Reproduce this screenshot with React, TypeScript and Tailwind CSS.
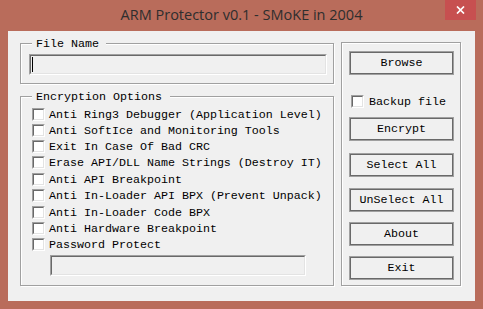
import React from "react";

const Check = () => (
  <div className="w-[13px] h-[13px] shrink-0 border border-t-[#a0a0a0] border-l-[#a0a0a0] border-b-white border-r-white">
    <div className="w-full h-full border border-t-[#696969] border-l-[#696969] border-b-[#e3e3e3] border-r-[#e3e3e3] bg-white" />
  </div>
);

const TextBox = ({ w, caret }: { w: string; caret?: boolean }) => (
  <div className={`${w} h-[21px] border border-t-[#a0a0a0] border-l-[#a0a0a0] border-b-white border-r-white`}>
    <div className="w-full h-full border border-t-[#696969] border-l-[#696969] border-b-[#e3e3e3] border-r-[#e3e3e3] bg-[#f0f0f0] pl-[1px] pt-[1px]">
      {caret ? <div className="w-[1px] h-[15px] bg-black" /> : null}
    </div>
  </div>
);

const Btn = ({ label, mt }: { label: string; mt: string }) => (
  <div className={`${mt} w-[105px] h-[24px] border border-[#a0a0a0]`}>
    <div className="w-full h-full border border-[#696969] flex items-center justify-center text-black">
      {label}
    </div>
  </div>
);

const options: { label: string; h: string }[] = [
  { label: "Anti Ring3 Debugger (Application Level)", h: "h-[16px]" },
  { label: "Anti SoftIce and Monitoring Tools", h: "h-[16px]" },
  { label: "Exit In Case Of Bad CRC", h: "h-[16px]" },
  { label: "Erase API/DLL Name Strings (Destroy IT)", h: "h-[17px]" },
  { label: "Anti API Breakpoint", h: "h-[16px]" },
  { label: "Anti In-Loader API BPX (Prevent Unpack)", h: "h-[17px]" },
  { label: "Anti In-Loader Code BPX", h: "h-[16px]" },
  { label: "Anti Hardware Breakpoint", h: "h-[16px]" },
  { label: "Password Protect", h: "h-[13px]" },
];

export default function App() {
  return (
    <div className="w-[483px] h-[309px] bg-[#b96c5b] flex flex-col font-['Liberation_Mono',monospace] text-[11.67px] leading-[14px] text-black">
      <div className="relative h-[31px] flex justify-center">
        <span className="mt-[5px] font-['Open_Sans',sans-serif] text-[14.5px] leading-[20px] text-[#2e2e2e]">
          ARM Protector v0.1 - SMoKE in 2004
        </span>
        <div className="absolute right-[7px] top-0 w-[31px] h-[20px] bg-[#c75050] flex items-center justify-center">
          <svg width="9" height="8" viewBox="0 0 9 8">
            <path d="M1 0.5 L8 7.5 M8 0.5 L1 7.5" stroke="white" strokeWidth="1.7" />
          </svg>
        </div>
      </div>
      <div className="mx-[8px] h-[270px] bg-[#f0f0f0] flex pt-[12px] pl-[12px]">
        <div className="w-[314px] flex flex-col">
          <div className="relative w-[314px] h-[41px] border border-[#a0a0a0] shadow-[1px_1px_0_#fff,inset_1px_1px_0_#fff] pl-[8px] pt-[10px]">
            <div className="absolute left-[11px] top-[-7px] bg-[#f0f0f0] pl-[4px] pr-[7px] h-[14px]">File Name</div>
            <TextBox w="w-[298px]" caret />
          </div>
          <div className="relative mt-[12px] w-[314px] h-[190px] border border-[#a0a0a0] shadow-[1px_1px_0_#fff,inset_1px_1px_0_#fff] pl-[11px] pt-[11px] flex flex-col">
            <div className="absolute left-[11px] top-[-7px] bg-[#f0f0f0] pl-[4px] pr-[8px] h-[14px]">Encryption Options</div>
            {options.map((o) => (
              <div key={o.label} className={`${o.h} flex items-start`}>
                <Check />
                <span className="ml-[4px] whitespace-pre">{o.label}</span>
              </div>
            ))}
            <div className="mt-[4px] ml-[18px]">
              <TextBox w="w-[256px]" />
            </div>
          </div>
        </div>
        <div className="ml-[7px] -mt-[1px] w-[120px] h-[244px] border border-[#a0a0a0] shadow-[1px_1px_0_#fff,inset_1px_1px_0_#fff] pl-[7px] pt-[8px] flex flex-col">
          <Btn label="Browse" mt="mt-0" />
          <div className="mt-[20px] ml-[2px] h-[13px] flex items-start">
            <Check />
            <span className="ml-[5px]">Backup file</span>
          </div>
          <Btn label="Encrypt" mt="mt-[9px]" />
          <Btn label="Select All" mt="mt-[12px]" />
          <Btn label="UnSelect All" mt="mt-[11px]" />
          <Btn label="About" mt="mt-[10px]" />
          <Btn label="Exit" mt="mt-[10px]" />
        </div>
      </div>
    </div>
  );
}
